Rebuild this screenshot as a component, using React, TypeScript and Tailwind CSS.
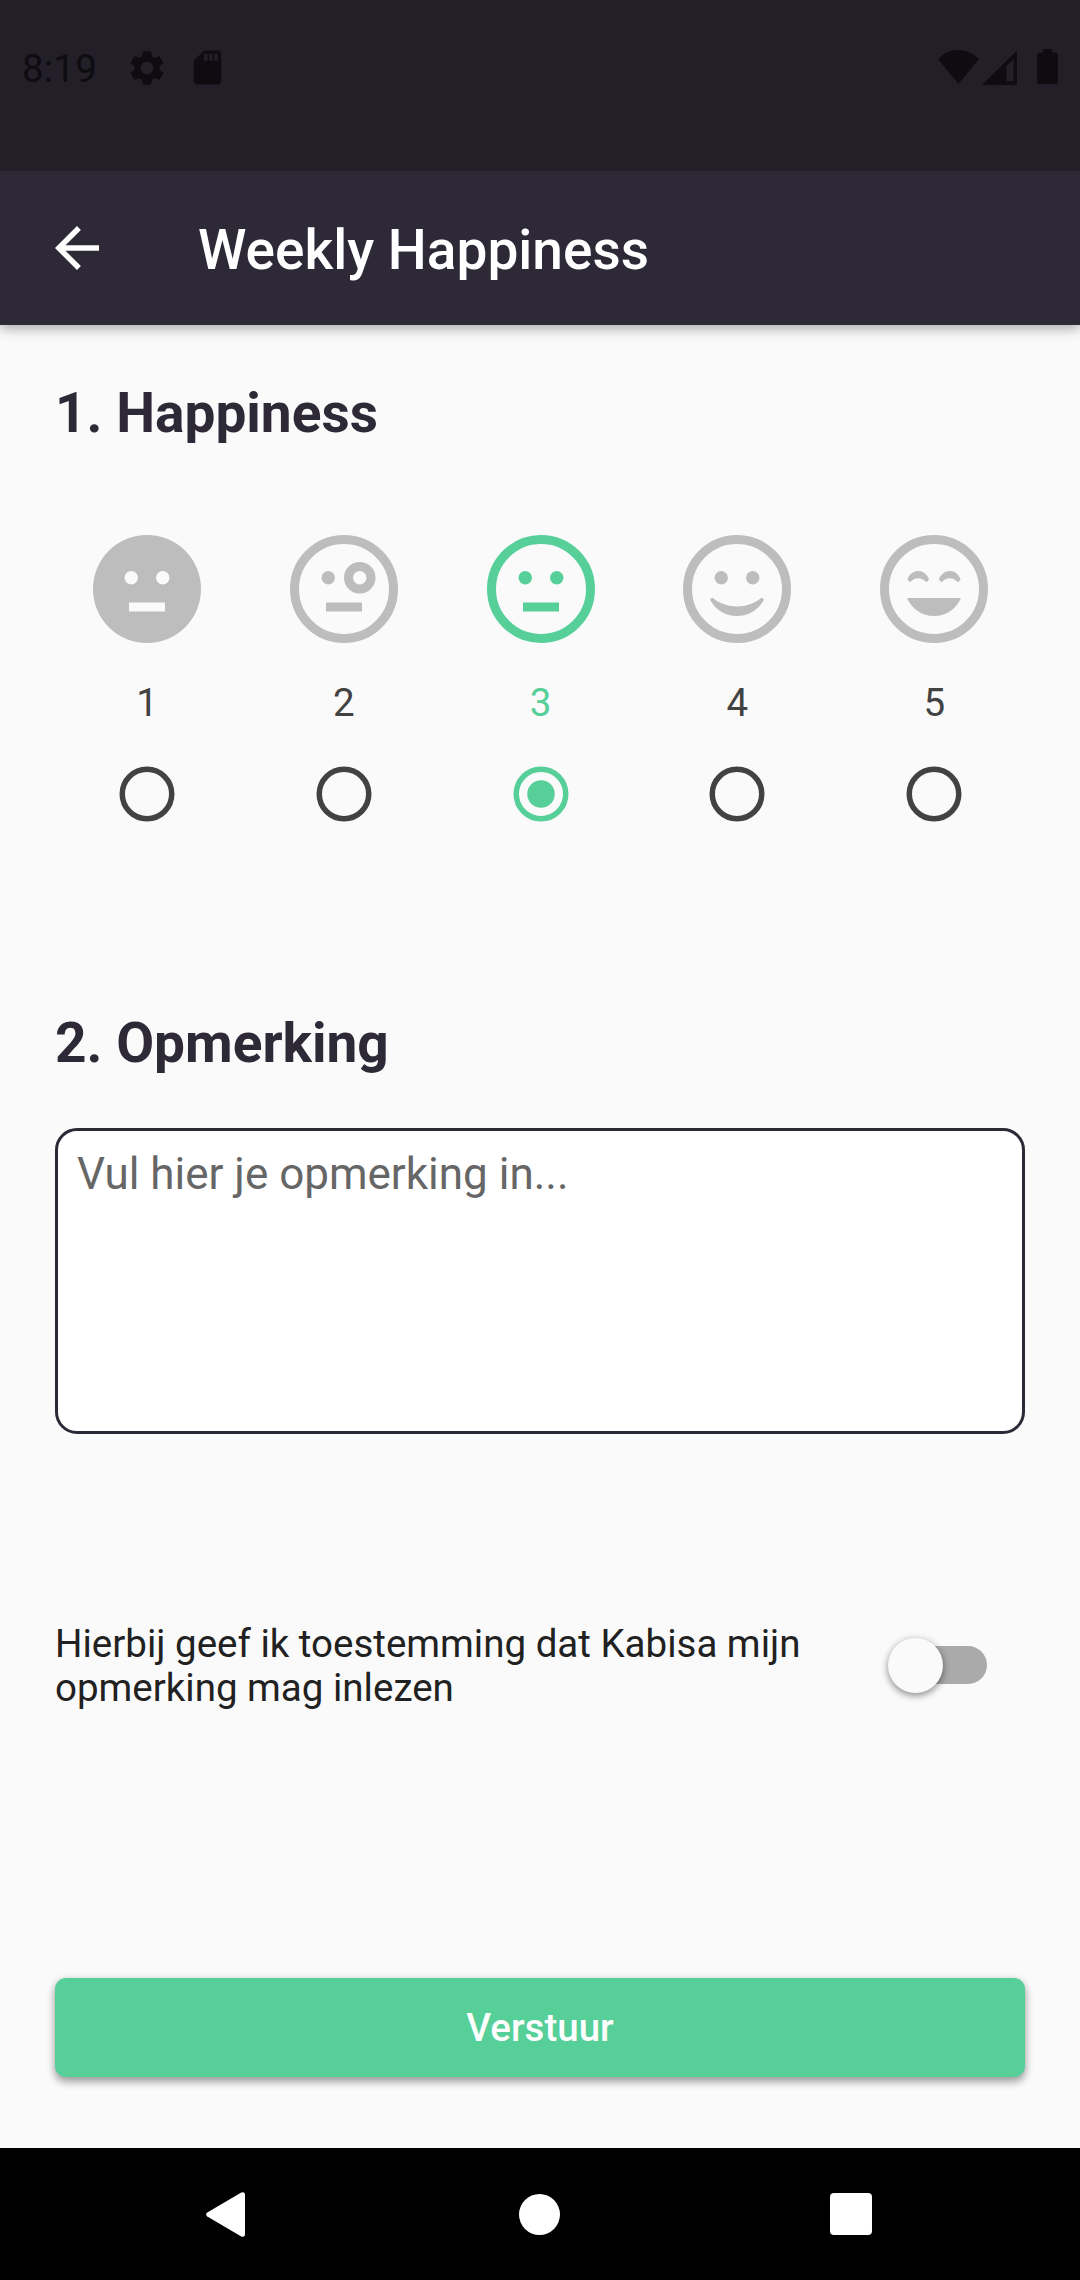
import { useState } from "react";
import type { ReactNode } from "react";

function Ring() {
  return <circle cx="12" cy="12" r="11" fill="none" stroke="currentColor" strokeWidth="2" />;
}

const faces: { value: number; drawing: ReactNode }[] = [
  {
    value: 1,
    drawing: (
      <path
        fillRule="evenodd"
        d="M12 0a12 12 0 1 0 0 24a12 12 0 1 0 0-24zM8.5 8a1.5 1.5 0 1 1 0 3a1.5 1.5 0 1 1 0-3zM15.5 8a1.5 1.5 0 1 1 0 3a1.5 1.5 0 1 1 0-3zM8 15h8v2H8z"
      />
    ),
  },
  {
    value: 2,
    drawing: (
      <>
        <Ring />
        <circle cx="8.5" cy="9.5" r="1.5" />
        <circle cx="15.5" cy="9.5" r="2.5" fill="none" stroke="currentColor" strokeWidth="2" />
        <path d="M8 15h8v2H8z" />
      </>
    ),
  },
  {
    value: 3,
    drawing: (
      <>
        <Ring />
        <circle cx="8.5" cy="9.5" r="1.5" />
        <circle cx="15.5" cy="9.5" r="1.5" />
        <path d="M8 15h8v2H8z" />
      </>
    ),
  },
  {
    value: 4,
    drawing: (
      <>
        <Ring />
        <circle cx="8.5" cy="9.5" r="1.5" />
        <circle cx="15.5" cy="9.5" r="1.5" />
        <path d="M6.72 14.07C8.2 15.25 10 15.9 12 15.9s3.8-.65 5.28-1.83c.4-.28.82.12.6.53C16.6 16.7 14.5 18 12 18s-4.6-1.3-5.88-3.4c-.22-.41.2-.81.6-.53z" />
      </>
    ),
  },
  {
    value: 5,
    drawing: (
      <>
        <Ring />
        <path d="M6.08 9.85C6.55 8.7 7.4 8 8.5 8s1.95.7 2.42 1.85l-.38.5c-.13.13-.3.13-.42 0C9.65 9.85 9.15 9.6 8.5 9.6s-1.15.25-1.62.75c-.12.13-.29.13-.42 0z" />
        <path d="M13.08 9.85C13.55 8.7 14.4 8 15.5 8s1.95.7 2.42 1.85l-.38.5c-.13.13-.3.13-.42 0-.47-.5-.97-.75-1.62-.75s-1.15.25-1.62.75c-.12.13-.29.13-.42 0z" />
        <path d="M6 14h12c-1 2.400-3.300 4-6 4s-5-1.600-6-4z" />
      </>
    ),
  },
];

function StatusBar() {
  return (
    <div className="relative z-10 flex h-[171px] items-start justify-between bg-[#221f29] pl-[22px] pr-[22px] pt-[47px] text-[#0e0c11]">
      <div className="flex items-start">
        <span className="mt-px w-[103.500px] text-[38.5px] leading-[42px] tracking-[0.2px]">8:19</span>
        <svg viewBox="0 0 24 24" className="-mt-[0.5px] size-[42px]" fill="currentColor">
          <path d="M19.14 12.94c.04-.3.06-.61.06-.94 0-.32-.02-.64-.07-.94l2.03-1.58c.18-.14.23-.41.12-.61l-1.92-3.32c-.12-.22-.37-.29-.59-.22l-2.39.96c-.5-.38-1.03-.7-1.62-.94l-.36-2.54c-.04-.24-.24-.41-.48-.41h-3.84c-.24 0-.43.17-.47.41l-.36 2.54c-.59.24-1.13.57-1.62.94l-2.39-.96c-.22-.08-.47 0-.59.22L2.74 8.87c-.12.21-.08.47.12.61l2.03 1.58c-.05.3-.09.63-.09.94s.02.64.07.94l-2.03 1.58c-.18.14-.23.41-.12.61l1.92 3.32c.12.22.37.29.59.22l2.39-.96c.5.38 1.03.7 1.62.94l.36 2.54c.05.24.24.41.48.41h3.84c.24 0 .44-.17.47-.41l.36-2.54c.59-.24 1.13-.56 1.62-.94l2.39.96c.22.08.47 0 .59-.22l1.92-3.32c.12-.22.07-.47-.12-.61l-2.01-1.58zM12 15.6c-1.98 0-3.6-1.62-3.6-3.6s1.62-3.6 3.6-3.6 3.6 1.62 3.6 3.6-1.62 3.6-3.6 3.6z" />
        </svg>
        <svg viewBox="0 0 24 24" className="ml-[19px] size-[41px]" fill="currentColor">
          <path d="M18 2h-8L4 8v12c0 1.1.9 2 2 2h12c1.1 0 2-.9 2-2V4c0-1.1-.9-2-2-2zm-6 6h-2V4h2v4zm3 0h-2V4h2v4zm3 0h-2V4h2v4z" />
        </svg>
      </div>
      <div className="flex items-end pt-[2px]">
        <svg viewBox="0 0 41 36" className="h-[36px] w-[41px]" fill="currentColor">
          <path d="M0 10C6 4 13 1 20.500 1S35 4 41 10L20.500 35z" />
        </svg>
        <svg viewBox="0 0 35 36" className="ml-[3px] h-[36px] w-[35px]" fill="currentColor">
          <path fillRule="evenodd" d="M35 1.500V36H0zM24.500 17V32H31.500V10z" />
        </svg>
        <svg viewBox="0 0 21 36" className="ml-[20px] h-[36px] w-[21px]" fill="currentColor">
          <path d="M6 0h9v3.500h3.500a2.500 2.500 0 0 1 2.500 2.500v26.500a2.500 2.500 0 0 1-2.500 2.500h-16a2.500 2.500 0 0 1-2.500-2.500V6a2.500 2.500 0 0 1 2.500-2.500H6z" />
        </svg>
      </div>
    </div>
  );
}

function AppBar() {
  return (
    <header className="relative flex h-[154px] items-center bg-[#2d2937] pl-[44px] text-white shadow-[0_4px_11px_rgba(0,0,0,0.28),0_2px_20px_rgba(0,0,0,0.06)]">
      <button aria-label="Terug">
        <svg viewBox="0 0 24 24" className="size-[66px]" fill="currentColor">
          <path d="M20 11H7.830l5.590-5.590L12 4l-8 8 8 8 1.410-1.410L7.830 13H20v-2z" />
        </svg>
      </button>
      <h1 className="ml-[88px] mt-1 text-[55px] font-medium leading-[64px]">Weekly Happiness</h1>
    </header>
  );
}

function Heading({ children }: { children: ReactNode }) {
  return <h2 className="text-[55px] font-bold leading-[64px] text-[#2d2937]">{children}</h2>;
}

function Radio({ selected }: { selected: boolean }) {
  return (
    <svg viewBox="0 0 56 56" className="mt-[41px] size-[56px]">
      <circle cx="28" cy="28" r="24.75" fill="none" stroke="currentColor" strokeWidth="5.5" />
      {selected && <circle cx="28" cy="28" r="13.75" fill="currentColor" />}
    </svg>
  );
}

function NavigationBar() {
  return (
    <nav className="flex h-[132px] items-center justify-between bg-black pl-[206px] pr-[208px] text-white">
      <svg viewBox="0 0 39 45" className="h-[45px] w-[39px]" fill="currentColor">
        <path d="M1.300 20.600 35.300.6Q39-.8 39 3.200V41.800Q39 45.800 35.300 44.400L1.300 24.400Q-1 22.500 1.300 20.600z" />
      </svg>
      <span className="ml-[3px] size-[41px] rounded-full bg-white" />
      <span className="size-[42px] rounded-[4px] bg-white" />
    </nav>
  );
}

export default function App() {
  const [selected, setSelected] = useState(3);
  return (
    <div className="flex h-[2280px] w-[1080px] flex-col overflow-hidden bg-[#fafafa] font-['Roboto',sans-serif]">
      <StatusBar />
      <AppBar />
      <main className="flex flex-1 flex-col px-[55px] pt-[56px]">
        <Heading>1. Happiness</Heading>
        <div className="-ml-[6.4px] -mr-[7.6px] mt-[90px] grid grid-cols-5">
          {faces.map(({ value, drawing }) => {
            const on = value === selected;
            return (
              <button
                key={value}
                onClick={() => setSelected(value)}
                className={`flex flex-col items-center ${on ? "text-[#56cf99]" : "text-[#424242]"}`}
              >
                <svg
                  viewBox="0 0 24 24"
                  className={`size-[108px] ${on ? "text-[#56cf99]" : "text-[#bdbdbd]"}`}
                  fill="currentColor"
                >
                  {drawing}
                </svg>
                <span className="mt-[37px] text-[38.5px] leading-[45px]">{value}</span>
                <Radio selected={on} />
              </button>
            );
          })}
        </div>

        <div className="mt-[189px]">
          <Heading>2. Opmerking</Heading>
        </div>
        <textarea
          placeholder="Vul hier je opmerking in..."
          className="mt-[53px] block h-[306px] w-full resize-none rounded-[22px] border-[3px] border-[#2d2937] bg-white px-[19px] pt-[17px] text-[44px] leading-[52px] placeholder:text-[#666666]"
        />

        <div className="mt-[188px] flex items-start justify-between pr-[38px]">
          <p className="w-[780px] text-[38.5px] leading-[44px] text-[#212121]">
            Hierbij geef ik toestemming dat Kabisa mijn opmerking mag inlezen
          </p>
          <button aria-label="Toestemming" className="mt-[15.5px] flex h-[55px] w-[99px] items-center">
            <span className="ml-[8px] flex h-[38.5px] w-[91px] items-center rounded-full bg-[#aaaaaa]">
              <span className="-ml-[8px] size-[55px] shrink-0 rounded-full bg-[#fafafa] shadow-[0_3px_7px_rgba(0,0,0,0.38),0_0_8px_rgba(0,0,0,0.1)]" />
            </span>
          </button>
        </div>

        <button className="mt-[267.5px] h-[99px] w-full rounded-[11px] bg-[#56cf99] text-[38.5px] font-medium leading-[45px] text-white shadow-[0_5px_8px_rgba(0,0,0,0.33),0_1px_8px_rgba(0,0,0,0.12)]">
          Verstuur
        </button>
      </main>
      <NavigationBar />
    </div>
  );
}
